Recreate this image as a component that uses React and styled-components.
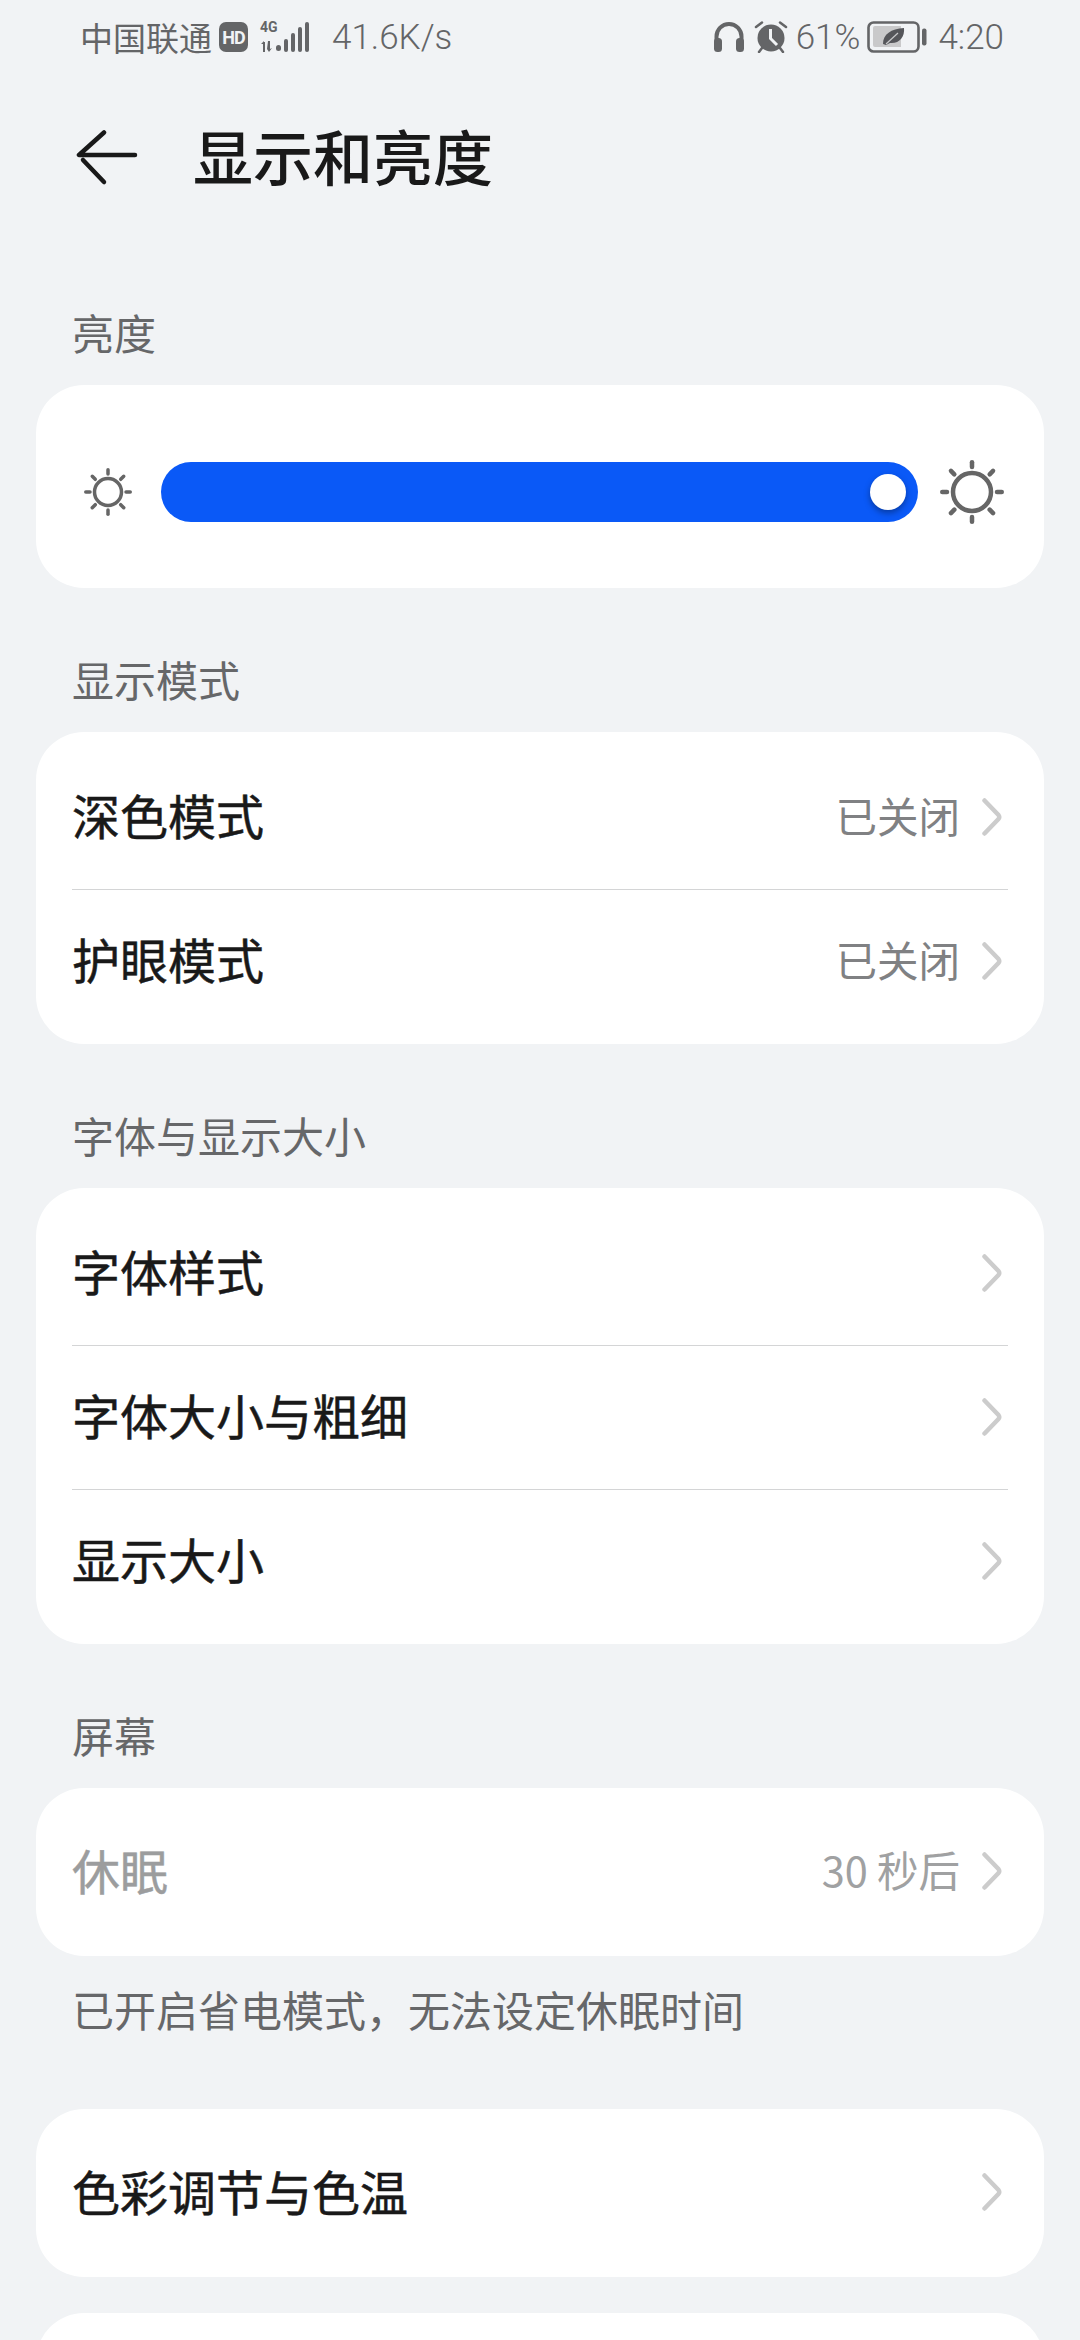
import React from "react";
import styled, { createGlobalStyle } from "styled-components";

const CJK = `"Noto Sans CJK SC", "Noto Sans", sans-serif`;

const GlobalStyle = createGlobalStyle`
  html, body {
    margin: 0;
    padding: 0;
    background: #f1f3f5;
  }
  * {
    box-sizing: border-box;
  }
`;

const Page = styled.div`
  width: 1080px;
  height: 2340px;
  overflow: hidden;
  background: #f1f3f5;
  font-family: ${CJK};
  padding: 0 36px;
`;

const StatusBar = styled.div`
  height: 74px;
  margin: 0 40px 0 44px;
  display: flex;
  align-items: center;
  justify-content: space-between;
  color: #646567;
`;

const StatusGroup = styled.div`
  display: flex;
  align-items: center;
`;

const Carrier = styled.span`
  font-size: 33px;
  line-height: 1;
  margin-right: 7px;
`;

const HdBadge = styled.span`
  width: 29px;
  height: 30px;
  border-radius: 7px;
  background: #646567;
  color: #f1f3f5;
  font-family: "Roboto", sans-serif;
  font-size: 18px;
  font-weight: 700;
  letter-spacing: -1px;
  display: flex;
  align-items: center;
  justify-content: center;
`;

const SignalBox = styled.div`
  position: relative;
  width: 50px;
  height: 30px;
  margin-left: 12px;
`;

const SignalLabel = styled.span`
  position: absolute;
  left: 0;
  top: -2px;
  font-family: "Roboto", sans-serif;
  font-size: 14px;
  font-weight: 700;
  line-height: 14px;
`;

const SignalBars = styled.svg`
  position: absolute;
  left: 0;
  top: 0;
`;

const StatusText = styled.span`
  font-family: "Roboto", sans-serif;
  font-weight: 300;
  font-size: 35px;
  line-height: 1;
  margin-left: ${(p) => p.$left || 0}px;
`;

const IconSlot = styled.span`
  display: flex;
  margin-left: ${(p) => p.$left || 0}px;
`;

const Header = styled.div`
  height: 100px;
  margin-top: 34px;
  padding-left: 40px;
  display: flex;
  align-items: center;
  gap: 55px;
`;

const Title = styled.h1`
  margin: 0 0 6px;
  font-size: 60px;
  font-weight: 500;
  line-height: 1;
  color: #191919;
`;

const SectionLabel = styled.div`
  height: 102px;
  margin-top: ${(p) => p.$top || 42}px;
  padding-left: 36px;
  padding-bottom: 6px;
  display: flex;
  align-items: center;
  font-size: 42px;
  color: #666769;
`;

const Card = styled.div`
  background: #fff;
  border-radius: 48px;
  margin-top: ${(p) => p.$top || 0}px;
  padding: ${(p) => (p.$list ? "14px 0 11px" : "0")};
  min-height: ${(p) => p.$minHeight || 0}px;
`;

const SliderCard = styled(Card)`
  height: 203px;
  padding: 11px 40px 0 48px;
  display: flex;
  align-items: center;
`;

const SliderTrack = styled.div`
  position: relative;
  width: 757px;
  height: 60px;
  margin: 0 22px 0 29px;
  border-radius: 30px;
  background: #0a59f7;
`;

const SliderThumb = styled.div`
  position: absolute;
  right: 12px;
  top: 12px;
  width: 36px;
  height: 36px;
  border-radius: 50%;
  background: #fff;
  box-shadow: 0 3px 6px rgba(0, 0, 0, 0.35);
`;

const Row = styled.div`
  height: ${(p) => p.$height}px;
  padding: 0 42px 0 36px;
  display: flex;
  align-items: center;
  justify-content: space-between;
`;

const Divider = styled.div`
  height: 1px;
  margin: 0 36px;
  background: #d4d5d6;
`;

const RowTitle = styled.span`
  font-size: 48px;
  font-weight: 400;
  margin-bottom: 7px;
  -webkit-text-stroke: 0.5px currentColor;
  color: ${(p) => (p.$muted ? "#9c9d9e" : "#191919")};
`;

const RowRight = styled.div`
  display: flex;
  align-items: center;
  gap: 22px;
  padding-bottom: 2px;
`;

const RowValue = styled.span`
  font-size: 41.5px;
  margin-bottom: 4px;
  color: ${(p) => (p.$muted ? "#a0a1a2" : "#808183")};
`;

const Note = styled.div`
  height: 106px;
  padding-left: 36px;
  padding-bottom: 2px;
  display: flex;
  align-items: center;
  font-size: 42px;
  color: #666769;
`;

const Sun = ({ size, ring, weight, ray }) => {
  const c = size / 2;
  const rays = [0, 45, 90, 135, 180, 225, 270, 315];
  return (
    <svg width={size} height={size} viewBox={`0 0 ${size} ${size}`} fill="none" stroke="#666" strokeLinecap="round">
      <circle cx={c} cy={c} r={ring} strokeWidth={weight} />
      {rays.map((a) => (
        <line
          key={a}
          x1={c}
          y1={weight / 2}
          x2={c}
          y2={ray}
          strokeWidth={weight}
          transform={`rotate(${a} ${c} ${c})`}
        />
      ))}
    </svg>
  );
};

const Chevron = () => (
  <svg width="20" height="38" viewBox="0 0 20 38" fill="none">
    <path d="M2.5 2.5 L16.5 17 Q18 19 16.5 21 L2.5 35.5" stroke="#cccccc" strokeWidth="4.5" strokeLinecap="round" strokeLinejoin="round" />
  </svg>
);

const BackArrow = () => (
  <svg width="62" height="56" viewBox="0 0 62 56" fill="none" stroke="#191919" strokeWidth="4.5" strokeLinecap="round" strokeLinejoin="round">
    <path d="M28 2.5 L3 25 L59 25" />
    <path d="M7 30 L28 52" />
  </svg>
);

const Signal = () => (
  <SignalBars width="50" height="30" viewBox="0 0 50 30" fill="#646567">
    <path d="M3 20 h2 v10 h-2 z M1 22 l3 -3 v3 z" />
    <path d="M8 19 h2 v8 l2 -1 l-3 4 l-2 -3 z" />
    <rect x="16" y="23" width="5" height="6" rx="2.5" />
    <rect x="24" y="17" width="4" height="13" rx="2" />
    <rect x="31" y="11" width="4" height="19" rx="2" />
    <rect x="38" y="5" width="4" height="25" rx="2" />
    <rect x="45" y="0" width="4" height="30" rx="2" />
  </SignalBars>
);

const Headphones = () => (
  <svg width="30" height="30" viewBox="0 0 30 30" fill="none">
    <path d="M2.5 20 V14.5 a12.5 12.5 0 0 1 25 0 V20" stroke="#646567" strokeWidth="4" />
    <rect x="0" y="16" width="8" height="14" rx="3.5" fill="#646567" />
    <rect x="22" y="16" width="8" height="14" rx="3.5" fill="#646567" />
  </svg>
);

const Alarm = () => (
  <svg width="34" height="32" viewBox="0 0 34 32">
    <circle cx="17" cy="17" r="13.5" fill="#646567" />
    <path d="M16.5 8 V17.5 L23 24" fill="none" stroke="#f1f3f5" strokeWidth="3" />
    <path d="M2 6 L8 1.5 M32 6 L26 1.5 M5 31 L8 27 M29 31 L26 27" stroke="#646567" strokeWidth="2.5" strokeLinecap="round" />
  </svg>
);

const Battery = () => (
  <svg width="60" height="32" viewBox="0 0 60 32">
    <rect x="1.5" y="1.5" width="50" height="29" rx="5" fill="none" stroke="#646567" strokeWidth="2.6" />
    <path d="M6 7 a2 2 0 0 1 2 -2 H34 V26 H8 a2 2 0 0 1 -2 -2 z" fill="#c9c9ca" />
    <rect x="55" y="7.5" width="4.5" height="17" rx="2" fill="#646567" />
    <path d="M16 23 C16 13 24 8 37 7 C38 16 32 23 23 22 L19 24 z" fill="#55565a" />
    <path d="M19 23 L31 12" stroke="#c9c9ca" strokeWidth="1.2" fill="none" />
  </svg>
);

const ListRow = ({ title, value, height = 143, muted }) => (
  <Row $height={height}>
    <RowTitle $muted={muted}>{title}</RowTitle>
    <RowRight>
      {value && <RowValue $muted={muted}>{value}</RowValue>}
      <Chevron />
    </RowRight>
  </Row>
);

export default function App() {
  return (
    <Page>
      <GlobalStyle />
      <StatusBar>
        <StatusGroup>
          <Carrier>中国联通</Carrier>
          <HdBadge>HD</HdBadge>
          <SignalBox>
            <SignalLabel>4G</SignalLabel>
            <Signal />
          </SignalBox>
          <StatusText $left={22}>41.6K/s</StatusText>
        </StatusGroup>
        <StatusGroup>
          <IconSlot><Headphones /></IconSlot>
          <IconSlot $left={10}><Alarm /></IconSlot>
          <StatusText $left={8}>61%</StatusText>
          <IconSlot $left={7}><Battery /></IconSlot>
          <StatusText $left={11}>4:20</StatusText>
        </StatusGroup>
      </StatusBar>
      <Header>
        <BackArrow />
        <Title>显示和亮度</Title>
      </Header>
      <SectionLabel $top={75}>亮度</SectionLabel>
      <SliderCard>
        <Sun size={48} ring={13.5} weight={3.5} ray={6} />
        <SliderTrack>
          <SliderThumb />
        </SliderTrack>
        <Sun size={64} ring={19} weight={4.5} ray={7} />
      </SliderCard>
      <SectionLabel>显示模式</SectionLabel>
      <Card $list>
        <ListRow title="深色模式" value="已关闭" />
        <Divider />
        <ListRow title="护眼模式" value="已关闭" />
      </Card>
      <SectionLabel>字体与显示大小</SectionLabel>
      <Card $list>
        <ListRow title="字体样式" />
        <Divider />
        <ListRow title="字体大小与粗细" />
        <Divider />
        <ListRow title="显示大小" />
      </Card>
      <SectionLabel>屏幕</SectionLabel>
      <Card>
        <ListRow title="休眠" value="30 秒后" height={168} muted />
      </Card>
      <Note>已开启省电模式，无法设定休眠时间</Note>
      <Card $top={47}>
        <ListRow title="色彩调节与色温" height={168} />
      </Card>
      <Card $top={36} $minHeight={168} />
    </Page>
  );
}
